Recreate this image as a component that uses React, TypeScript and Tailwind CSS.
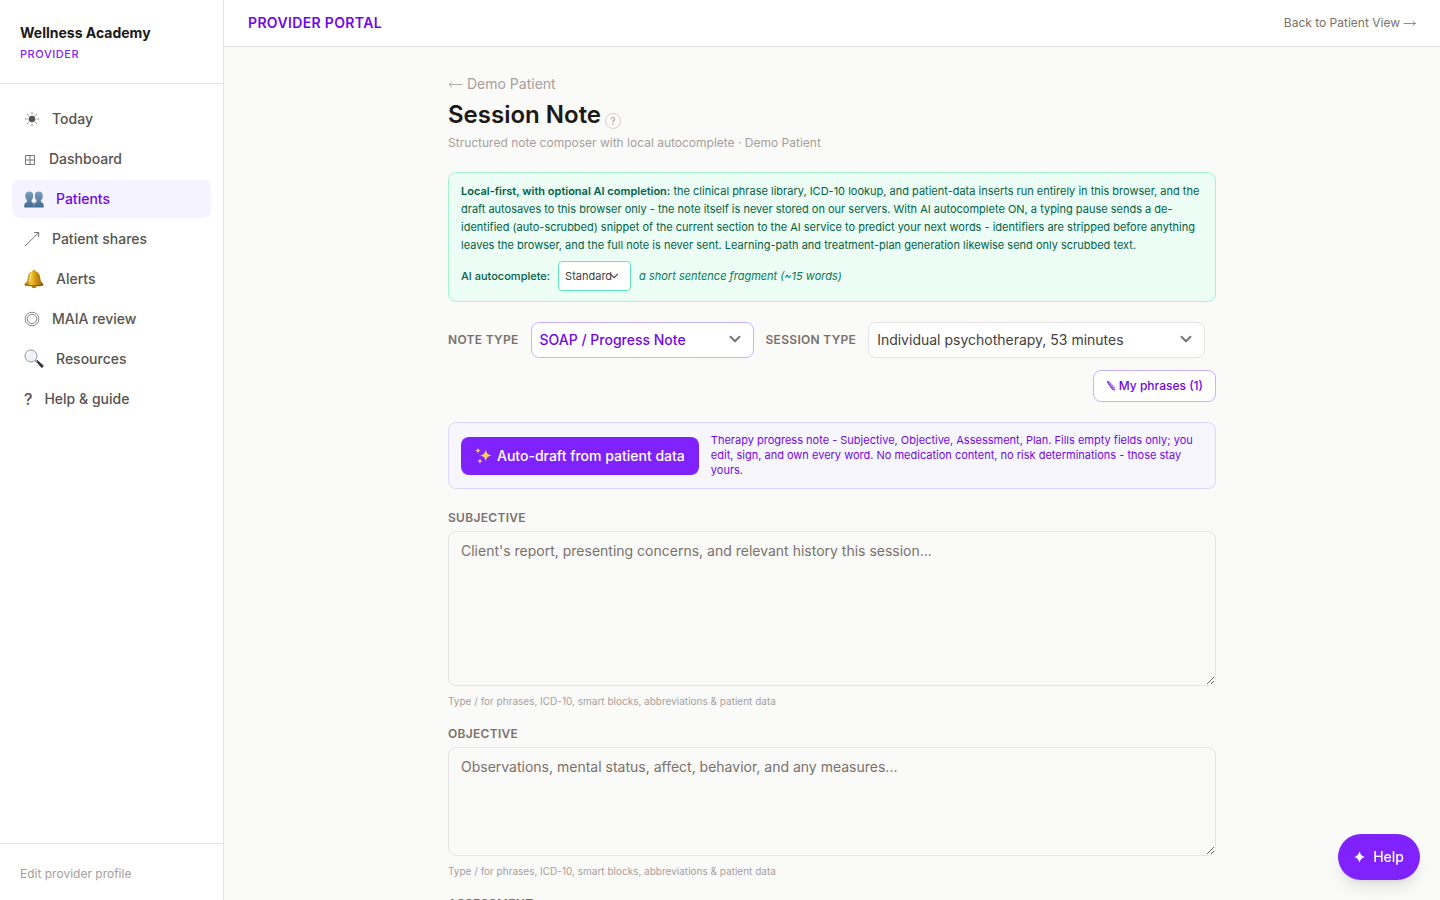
import type { ReactNode } from "react";
import { ChevronDown } from "lucide-react";

function SunIcon() {
  return (
    <svg viewBox="0 0 16 16" className="size-4" aria-hidden="true">
      <circle cx="8" cy="8" r="3.3" fill="currentColor" />
      <path
        d="M8 .8v2.6M8 12.6v2.6M.8 8h2.6M12.6 8h2.6M2.9 2.9l1.9 1.9M11.2 11.2l1.9 1.9M13.1 2.9l-1.9 1.9M4.8 11.2l-1.9 1.9"
        stroke="currentColor"
        strokeWidth="0.6"
      />
    </svg>
  );
}

function GridIcon() {
  return (
    <svg viewBox="0 0 13 16" className="h-4 w-[13px]" fill="none" stroke="currentColor" strokeWidth="0.8" aria-hidden="true">
      <path d="M1.5 4.5h9v9h-9zM6 4.5v9M1.5 9h9" />
    </svg>
  );
}

function PeopleIcon() {
  return (
    <svg viewBox="0 0 20 20" className="size-5" aria-hidden="true">
      <defs>
        <linearGradient id="people" x1="0" y1="0" x2="0" y2="1">
          <stop offset="0" stopColor="#7ba0bd" />
          <stop offset="1" stopColor="#426a91" />
        </linearGradient>
      </defs>
      <path
        fill="url(#people)"
        d="M5.6 2.6C8 2.6 9.2 4.2 9.2 6.4c0 2.3-.8 4-1.7 5v1.2c0 .7 2.3 1.1 2.5 2.4.2-1.3 2.5-1.7 2.5-2.4v-1.2c-.9-1-1.7-2.7-1.7-5 0-2.2 1.2-3.8 3.8-3.8s4.2 1.6 4.2 3.8c0 2.3-.9 4-1.9 5v1.2c0 1 2.8 1 2.8 3.6v2.4H.3v-2.4c0-2.6 2.8-2.6 2.8-3.6v-1.2c-1-1-1.9-2.7-1.9-5 0-2.2 1.8-3.8 4.4-3.8z"
      />
      <path d="M10 14.5v4" stroke="#8fb0c9" strokeWidth="0.5" />
    </svg>
  );
}

function ShareArrowIcon() {
  return (
    <svg viewBox="0 0 16 16" className="size-4" fill="none" stroke="currentColor" strokeWidth="0.8" aria-hidden="true">
      <path d="M1 15 14.5 1.8M10 1.6l4.8-.1-.2 4.8" />
    </svg>
  );
}

function BellIcon() {
  return (
    <svg viewBox="0 0 20 20" className="size-5" aria-hidden="true">
      <defs>
        <linearGradient id="bell" x1="0" y1="0" x2="1" y2="0">
          <stop offset="0" stopColor="#a36a05" />
          <stop offset="0.35" stopColor="#f0c43a" />
          <stop offset="0.6" stopColor="#cf950f" />
          <stop offset="1" stopColor="#8f5a06" />
        </linearGradient>
      </defs>
      <ellipse cx="10" cy="17.4" rx="2.4" ry="1.7" fill="#a86e0a" />
      <path
        fill="url(#bell)"
        d="M10 1c1.2 0 1.7.7 1.9 1.4 2.7.8 4 3 4.3 6 .3 3 .8 4.7 3 6.3.5.4.5 1.3-.2 1.7-2.3 1.2-15.7 1.2-18 0-.7-.4-.7-1.3-.2-1.700 2.2-1.6 2.7-3.3 3-6.3.3-3 1.6-5.2 4.3-6C8.3 1.7 8.8 1 10 1z"
      />
      <path d="M1.3 15.700c4 1.3 13.4 1.3 17.4 0" fill="none" stroke="#6f4503" strokeWidth="0.7" />
      <path d="M7.3 5.2c-1 1.7-.9 4.7-1.7 7.3" fill="none" stroke="#fff0a0" strokeWidth="1" strokeLinecap="round" />
    </svg>
  );
}

function RingsIcon() {
  return (
    <svg viewBox="0 0 16 16" className="size-4" fill="none" stroke="currentColor" strokeWidth="0.7" aria-hidden="true">
      <circle cx="8" cy="8" r="6.8" />
      <circle cx="8" cy="8" r="4.7" />
    </svg>
  );
}

function MagnifierIcon() {
  return (
    <svg viewBox="0 0 20 20" className="size-5" aria-hidden="true">
      <path d="m11.8 12.3 1.5-1.4 5.9 5.4c1 1-.9 3.1-2 2.2z" fill="#2f3337" />
      <path d="m11 11.4 2.2 2" stroke="#8b9298" strokeWidth="1.4" />
      <circle cx="7" cy="7" r="6" fill="#edf3f6" stroke="#8d9aa5" strokeWidth="1" />
      <path d="M2.5 7A4.5 4.5 0 0 1 7 2.5" fill="none" stroke="#ffffff" strokeWidth="1.2" />
    </svg>
  );
}

function SparklesIcon() {
  return (
    <svg viewBox="0 0 18 18" className="size-[18px]" fill="#fcd34d" aria-hidden="true">
      <path d="M10.800 2.200c.8 4.200 1.900 5.500 6 6.200-4.100.7-5.200 2-6 6.200-.8-4.200-1.900-5.500-6-6.200 4.100-.7 5.200-2 6-6.200z" />
      <path d="M3 .8c.4 2 .9 2.600 2.800 2.900C3.900 4 3.400 4.600 3 6.600 2.600 4.600 2.100 4 .2 3.700 2.100 3.400 2.600 2.800 3 .8z" />
      <path d="M5 11.600c.4 1.800.8 2.300 2.500 2.600-1.700.3-2.100.8-2.500 2.600-.4-1.800-.8-2.300-2.500-2.600 1.700-.3 2.100-.8 2.500-2.600z" />
    </svg>
  );
}

function PencilIcon() {
  return (
    <svg viewBox="0 0 10 12" className="h-3 w-2.5" fill="none" stroke="currentColor" strokeWidth="0.6" aria-hidden="true">
      <path d="M1 1.8 2.9 1.2 8.2 7.4 8.6 10.2 5.9 9.3z" fill="currentColor" fillOpacity="0.3" />
      <path d="m1.9 1.5 5.2 8M2 3.3l5.5 5" />
    </svg>
  );
}

function StarIcon() {
  return (
    <svg viewBox="0 0 11 12" className="h-3 w-[11px]" fill="currentColor" aria-hidden="true">
      <path d="M5.5.5c.9 3 2.300 4.600 5.300 5.500-3 .9-4.400 2.500-5.300 5.500C4.600 8.500 3.200 6.900.2 6 3.200 5.100 4.600 3.500 5.500.5z" />
    </svg>
  );
}

type NavItem = { icon: ReactNode; label: string; active?: boolean };

const navItems: NavItem[] = [
  { icon: <SunIcon />, label: "Today" },
  { icon: <GridIcon />, label: "Dashboard" },
  { icon: <PeopleIcon />, label: "Patients", active: true },
  { icon: <ShareArrowIcon />, label: "Patient shares" },
  { icon: <BellIcon />, label: "Alerts" },
  { icon: <RingsIcon />, label: "MAIA review" },
  { icon: <MagnifierIcon />, label: "Resources" },
  { icon: "?", label: "Help & guide" },
];

function Sidebar() {
  return (
    <aside className="flex w-56 shrink-0 flex-col border-r border-[#e5e5e5] bg-white">
      <div className="border-b border-[#e5e5e5] px-5 py-5">
        <div className="text-sm leading-[26px] font-bold text-stone-900">Wellness Academy</div>
        <div className="text-[11px] leading-[17px] font-medium tracking-wider text-violet-600">PROVIDER</div>
      </div>
      <nav className="flex flex-1 flex-col gap-0.5 px-3 py-4">
        {navItems.map((item) => (
          <a
            key={item.label}
            href="#"
            className={
              item.active
                ? "flex items-center gap-3 rounded-lg bg-violet-50 px-3 py-2 text-sm leading-[22px] font-medium text-violet-700"
                : "flex items-center gap-3 rounded-lg px-3 py-2 text-sm leading-[22px] font-medium text-stone-600"
            }
          >
            <span className="text-base leading-[22px]">{item.icon}</span>
            {item.label}
          </a>
        ))}
      </nav>
      <div className="border-t border-[#e5e5e5] px-5 pt-5 pb-4">
        <a href="#" className="block text-xs leading-5 text-stone-400">
          Edit provider profile
        </a>
      </div>
    </aside>
  );
}

function PrivacyNotice() {
  return (
    <section className="rounded-lg border border-emerald-200 bg-emerald-50 px-3 pt-[9px] pb-2.5 text-[11px] leading-[18px] text-emerald-800">
      <p>
        <strong className="font-semibold">Local-first, with optional AI completion:</strong> the clinical phrase
        library, ICD-10 lookup, and patient-data inserts run entirely in this browser, and the draft autosaves to this
        browser only - the note itself is never stored on our servers. With AI autocomplete ON, a typing pause sends a
        de-identified (auto-scrubbed) snippet of the current section to the AI service to predict your next words -
        identifiers are stripped before anything leaves the browser, and the full note is never sent. Learning-path and
        treatment-plan generation likewise send only scrubbed text.
      </p>
      <div className="mt-[7px] flex items-center gap-2">
        <label htmlFor="autocomplete" className="font-medium">
          AI autocomplete:
        </label>
        <span className="relative">
          <select
            id="autocomplete"
            className="block h-[30px] w-[73px] appearance-none rounded border border-emerald-300 bg-white px-1.5 text-[11px] text-stone-700"
          >
            <option>Standard</option>
            <option>Off</option>
            <option>Short</option>
            <option>Long</option>
          </select>
          <ChevronDown
            className="pointer-events-none absolute top-2 right-2.5 size-3.5 text-stone-600"
            strokeWidth={2}
          />
        </span>
        <em className="text-emerald-700">a short sentence fragment (~15 words)</em>
      </div>
    </section>
  );
}

function NoteControls() {
  return (
    <div className="mt-5 flex flex-wrap items-center gap-3">
      <label htmlFor="note-type" className="text-xs font-semibold tracking-wide text-stone-500">
        NOTE TYPE
      </label>
      <span className="relative">
        <select
          id="note-type"
          className="block h-9 w-[223px] appearance-none rounded-lg border border-violet-300 bg-white pr-8 pl-2 text-sm font-medium text-violet-700"
        >
          <option>SOAP / Progress Note</option>
          <option>DAP Note</option>
          <option>Intake Assessment</option>
        </select>
        <ChevronDown className="pointer-events-none absolute top-2 right-2.5 size-[18px] text-stone-500" strokeWidth={2.5} />
      </span>
      <label htmlFor="session-type" className="text-xs font-semibold tracking-wide text-stone-500">
        SESSION TYPE
      </label>
      <span className="relative">
        <select
          id="session-type"
          className="block h-9 w-[337px] appearance-none rounded-lg border border-[#e5e5e5] bg-white pr-8 pl-2 text-sm text-stone-700"
        >
          <option>Individual psychotherapy, 53 minutes</option>
          <option>Individual psychotherapy, 45 minutes</option>
        </select>
        <ChevronDown className="pointer-events-none absolute top-2 right-2.5 size-[18px] text-stone-500" strokeWidth={2.5} />
      </span>
      <button
        type="button"
        className="ml-auto flex h-8 items-center gap-[3px] rounded-lg border border-violet-300 bg-white px-3 text-xs font-medium text-violet-700"
      >
        <PencilIcon />
        My phrases (1)
      </button>
    </div>
  );
}

type NoteFieldProps = { id: string; label: string; placeholder: string; tall?: boolean };

function NoteField({ id, label, placeholder, tall }: NoteFieldProps) {
  return (
    <div>
      <label htmlFor={id} className="mb-1 block text-xs leading-[18px] font-semibold tracking-wide text-stone-500">
        {label}
      </label>
      <textarea
        id={id}
        placeholder={placeholder}
        className={
          tall
            ? "block h-[155px] w-full resize-y rounded-lg border border-[#e5e5e5] px-3 py-2 text-sm leading-[22px] placeholder:text-stone-500"
            : "block h-[109px] w-full resize-y rounded-lg border border-[#e5e5e5] px-3 py-2 text-sm leading-[22px] placeholder:text-stone-500"
        }
      />
      <p className="mt-2 text-[10px] leading-[15px] text-stone-400">
        Type / for phrases, ICD-10, smart blocks, abbreviations &amp; patient data
      </p>
    </div>
  );
}

export default function App() {
  return (
    <div className="flex h-screen bg-[#fafaf9] font-['Inter',sans-serif] text-stone-900">
      <Sidebar />
      <div className="flex min-w-0 flex-1 flex-col">
        <header className="flex items-center justify-between border-b border-[#e5e5e5] bg-white px-6 py-3">
          <span className="text-sm leading-[22px] font-semibold tracking-wide text-violet-700">PROVIDER PORTAL</span>
          <a href="#" className="flex items-center gap-[3px] text-xs text-stone-500">
            Back to Patient View
            <svg viewBox="0 0 13 10" className="h-2.5 w-[13px]" fill="none" stroke="currentColor" strokeWidth="0.8" aria-hidden="true">
              <path d="M.5 5.5h12M9.700 3.300l2.800 2.200-2.800 2.200" />
            </svg>
          </a>
        </header>
        <main className="flex-1 overflow-y-auto px-6 py-6">
          <div className="mx-auto max-w-3xl">
            <a href="#" className="mt-1 flex items-center gap-1 text-sm leading-[18px] text-stone-400">
              <svg viewBox="0 0 15 10" className="h-2.5 w-[15px]" fill="none" stroke="currentColor" strokeWidth="0.9" aria-hidden="true">
                <path d="M14.5 5.5H1M4 2.7 1 5.5l3 2.8" />
              </svg>
              Demo Patient
            </a>
            <div className="mt-1.5 flex items-center gap-1">
              <h1 className="text-2xl leading-8 font-semibold">Session Note</h1>
              <button
                type="button"
                aria-label="About session notes"
                className="mt-3 flex size-4 items-center justify-center rounded-full border border-stone-300 text-[10px] leading-none text-stone-400"
              >
                ?
              </button>
            </div>
            <p className="mt-1 mb-[21px] text-xs leading-4 text-stone-400">
              Structured note composer with local autocomplete · Demo Patient
            </p>
            <PrivacyNotice />
            <NoteControls />
            <section className="mt-5 flex items-center gap-3 rounded-lg border border-violet-200 bg-violet-50/60 px-3 py-2.5">
              <button
                type="button"
                className="flex h-[38px] shrink-0 items-center gap-1 rounded-lg bg-violet-600 px-3.5 text-sm font-medium text-white"
              >
                <SparklesIcon />
                Auto-draft from patient data
              </button>
              <p className="text-[11px] leading-[15px] text-violet-700">
                Therapy progress note - Subjective, Objective, Assessment, Plan. Fills empty fields only; you edit,
                sign, and own every word. No medication content, no risk determinations - those stay yours.
              </p>
            </section>
            <div className="mt-5 flex flex-col gap-4">
              <NoteField
                id="subjective"
                label="SUBJECTIVE"
                placeholder="Client's report, presenting concerns, and relevant history this session..."
                tall
              />
              <NoteField
                id="objective"
                label="OBJECTIVE"
                placeholder="Observations, mental status, affect, behavior, and any measures..."
              />
              <NoteField id="assessment" label="ASSESSMENT" placeholder="Clinical impressions and progress..." />
            </div>
          </div>
        </main>
      </div>
      <button
        type="button"
        className="fixed right-5 bottom-5 flex h-[46px] items-center gap-2 rounded-full bg-violet-600 px-4 text-sm font-medium text-white shadow-lg"
      >
        <StarIcon />
        Help
      </button>
    </div>
  );
}
